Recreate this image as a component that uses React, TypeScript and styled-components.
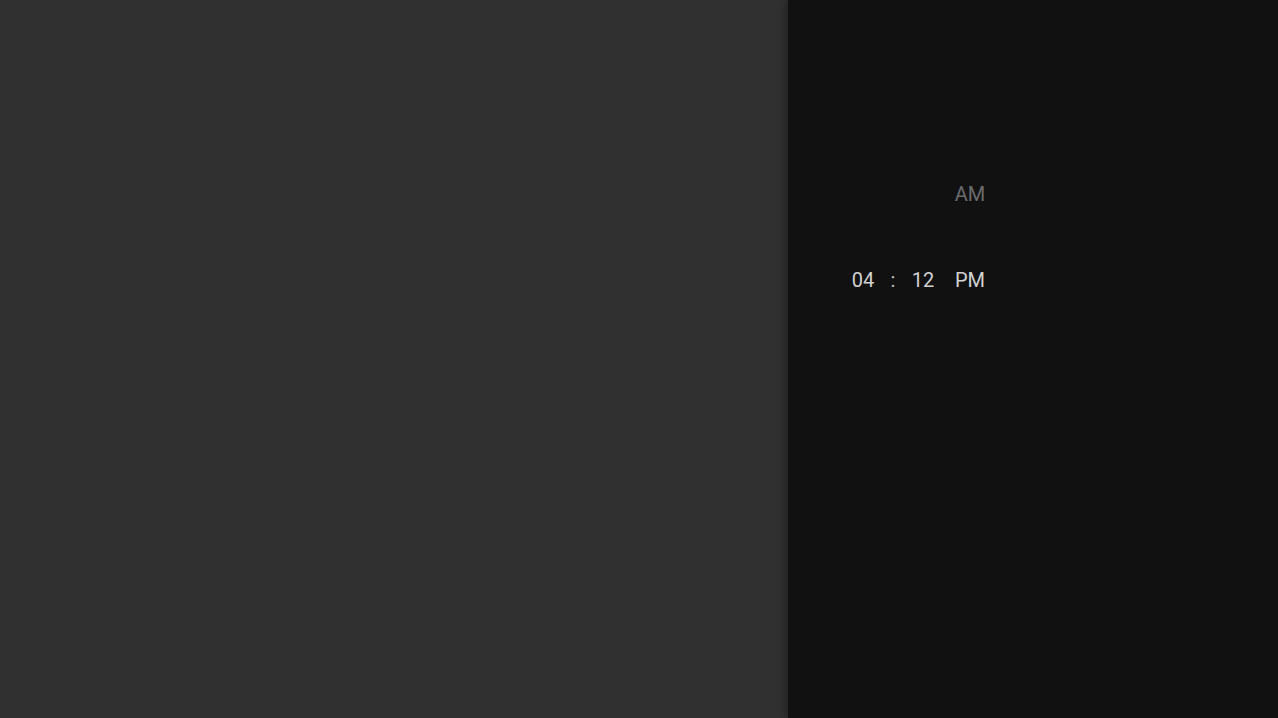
import React from "react";
import styled, { createGlobalStyle } from "styled-components";

const Global = createGlobalStyle`
  html, body { margin: 0; padding: 0; height: 100%; background: #111111; }
  #root { height: 100%; }
  * { box-sizing: border-box; }
`;

const Page = styled.div`
  display: flex;
  width: 1278px;
  height: 718px;
  overflow: hidden;
  font-family: Roboto, "Liberation Sans", sans-serif;
`;

const LeftPane = styled.div`
  width: 788px;
  flex: none;
  background: #303030;
`;

const RightPane = styled.div`
  flex: 1;
  background: #111111;
  box-shadow: -3px 0 6px rgba(0, 0, 0, 0.25);
  position: relative;
  padding: 182px 0 0 63px;
`;

const Picker = styled.div`
  display: flex;
  align-items: flex-end;
`;

const Column = styled.div<{ $w: number }>`
  display: flex;
  flex-direction: column;
  align-items: center;
  gap: 62px;
  width: ${(p) => p.$w}px;
`;

const Item = styled.div<{ $active?: boolean }>`
  height: 24px;
  line-height: 24px;
  font-size: 20px;
  color: ${(p) => (p.$active ? "#d2d2d2" : "#6c6c6c")};
`;

const Colon = styled.div`
  height: 24px;
  line-height: 24px;
  font-size: 20px;
  color: #bdbdbd;
  width: 36px;
  text-align: center;
`;

export default function App() {
  return (
    <>
      <Global />
      <Page>
        <LeftPane />
        <RightPane>
          <Picker>
            <Column $w={24}>
              <Item $active>04</Item>
            </Column>
            <Colon>:</Colon>
            <Column $w={24}>
              <Item $active>12</Item>
            </Column>
            <Column $w={70}>
              <Item>AM</Item>
              <Item $active>PM</Item>
            </Column>
          </Picker>
        </RightPane>
      </Page>
    </>
  );
}
